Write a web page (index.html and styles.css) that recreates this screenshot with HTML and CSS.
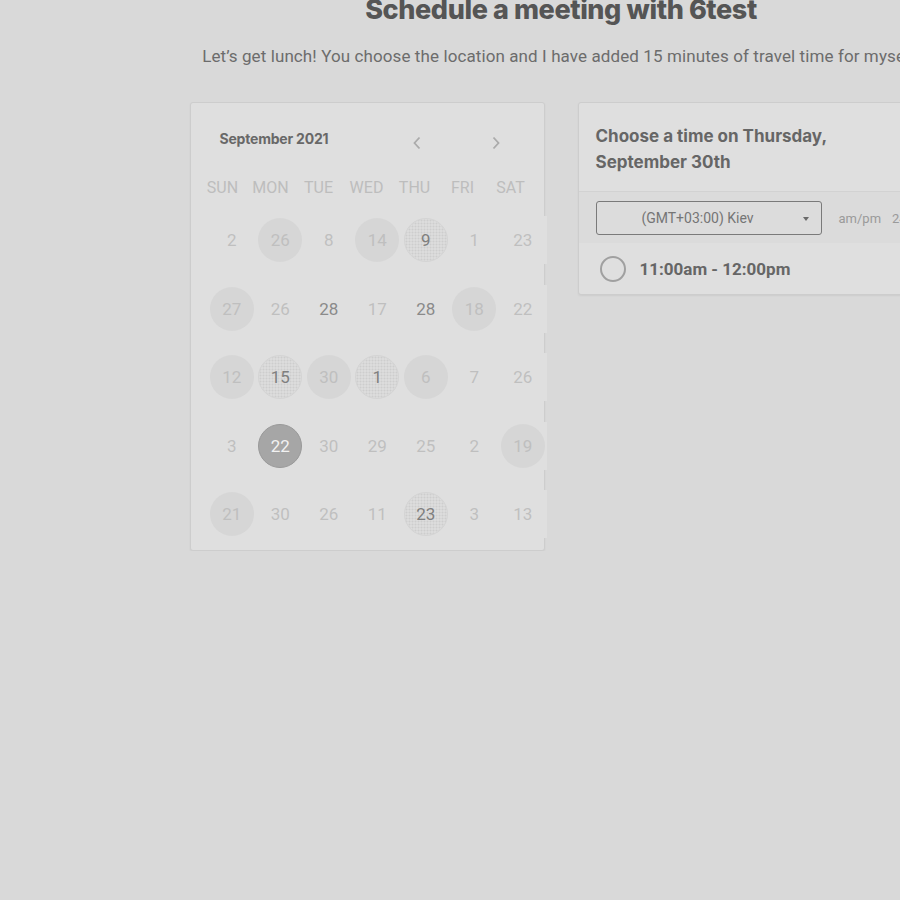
FILE: index.html
```html
<!DOCTYPE html>
<html lang="en">
<head>
<meta charset="utf-8">
<title>Schedule a meeting</title>
<link rel="stylesheet" href="styles.css">
</head>
<body>
<div class="page">
  <h1 class="title">Schedule a meeting with 6test</h1>
  <p class="subtitle">Let’s get lunch! You choose the location and I have added 15 minutes of travel time for myself.</p>
  <div class="cards">
    <section class="card calendar">
      <div class="cal-head">
        <span class="month">September 2021</span>
        <span class="navs">
          <svg class="nav" width="12" height="16" viewBox="0 0 12 16"><path d="M8.5 2.5 L3.5 8 L8.5 13.5" fill="none" stroke="#ababab" stroke-width="1.8"/></svg>
          <svg class="nav" width="12" height="16" viewBox="0 0 12 16"><path d="M3.5 2.5 L8.5 8 L3.5 13.5" fill="none" stroke="#ababab" stroke-width="1.8"/></svg>
        </span>
      </div>
      <div class="weekdays">
        <span>SUN</span><span>MON</span><span>TUE</span><span>WED</span><span>THU</span><span>FRI</span><span>SAT</span>
      </div>
      <div class="days">
        <div class="cell"><span class="d">2</span></div>
        <div class="cell"><span class="d fill">26</span></div>
        <div class="cell"><span class="d">8</span></div>
        <div class="cell"><span class="d fill">14</span></div>
        <div class="cell"><span class="d tex">9</span></div>
        <div class="cell"><span class="d">1</span></div>
        <div class="cell"><span class="d">23</span></div>

        <div class="cell"><span class="d fill">27</span></div>
        <div class="cell"><span class="d">26</span></div>
        <div class="cell"><span class="d dark">28</span></div>
        <div class="cell"><span class="d">17</span></div>
        <div class="cell"><span class="d dark">28</span></div>
        <div class="cell"><span class="d fill">18</span></div>
        <div class="cell"><span class="d">22</span></div>

        <div class="cell"><span class="d fill">12</span></div>
        <div class="cell"><span class="d tex">15</span></div>
        <div class="cell"><span class="d fill">30</span></div>
        <div class="cell"><span class="d tex">1</span></div>
        <div class="cell"><span class="d fill">6</span></div>
        <div class="cell"><span class="d">7</span></div>
        <div class="cell"><span class="d">26</span></div>

        <div class="cell"><span class="d">3</span></div>
        <div class="cell"><span class="d sel">22</span></div>
        <div class="cell"><span class="d">30</span></div>
        <div class="cell"><span class="d">29</span></div>
        <div class="cell"><span class="d">25</span></div>
        <div class="cell"><span class="d">2</span></div>
        <div class="cell"><span class="d fill">19</span></div>

        <div class="cell"><span class="d fill">21</span></div>
        <div class="cell"><span class="d">30</span></div>
        <div class="cell"><span class="d">26</span></div>
        <div class="cell"><span class="d">11</span></div>
        <div class="cell"><span class="d tex">23</span></div>
        <div class="cell"><span class="d">3</span></div>
        <div class="cell"><span class="d">13</span></div>
      </div>
    </section>

    <section class="card times">
      <h2 class="times-head">Choose a time on Thursday, September 30th</h2>
      <div class="tz-bar">
        <div class="select">
          <span class="select-text">(GMT+03:00) Kiev</span>
          <span class="caret"></span>
        </div>
        <span class="fmt"><span class="fmt-opt">am/pm</span><span class="fmt-opt">24h</span></span>
      </div>
      <div class="slot">
        <span class="radio"></span>
        <span class="slot-text">11:00am - 12:00pm</span>
      </div>
    </section>
  </div>
</div>
</body>
</html>
```

FILE: styles.css
```css
html, body {
  margin: 0;
  padding: 0;
  background: #d9d9d9;
  overflow: hidden;
}

.page {
  width: 1122px;
  text-align: center;
  font-family: Roboto, "Liberation Sans", sans-serif;
}

.title {
  margin: -7px 0 0;
  font-family: Inter, Roboto, sans-serif;
  font-weight: 800;
  font-size: 27px;
  line-height: 34px;
  letter-spacing: -0.4px;
  color: #555555;
}

.subtitle {
  margin: 19px 0 0;
  font-size: 17px;
  line-height: 20px;
  letter-spacing: 0.1px;
  color: #6c6c6c;
  white-space: nowrap;
}

.cards {
  display: flex;
  justify-content: center;
  align-items: flex-start;
  gap: 33px;
  margin-top: 36px;
  text-align: left;
}

.card {
  width: 355px;
  box-sizing: border-box;
  background: #dfdfdf;
  border: 1px solid #cdcdcd;
  border-radius: 3px;
  box-shadow: 0 1px 2px rgba(0, 0, 0, 0.06);
}

/* calendar */
.calendar {
  height: 449px;
  padding: 25px 0 0 8px;
}

.cal-head {
  display: flex;
  align-items: center;
  height: 24px;
  padding-left: 21px;
}

.month {
  font-family: Inter, Roboto, sans-serif;
  font-weight: 700;
  font-size: 14px;
  color: #686868;
  letter-spacing: -0.2px;
  margin-top: -3px;
}

.navs {
  display: flex;
  gap: 67px;
  margin-left: 83px;
  margin-top: 6px;
}

.weekdays {
  display: grid;
  grid-template-columns: repeat(7, 48px);
  margin-top: 23px;
  height: 24px;
  align-items: center;
}

.weekdays span {
  text-align: center;
  font-size: 16px;
  color: #bdbdbd;
}

.days {
  display: grid;
  grid-template-columns: repeat(7, 48.5px);
  grid-auto-rows: 48px;
  row-gap: 20.5px;
  margin-top: 17px;
  margin-left: 9px;
}

.cell {
  display: flex;
  align-items: center;
  justify-content: center;
  background: #dfdfdf;
}

.d {
  width: 44px;
  height: 44px;
  border-radius: 50%;
  display: flex;
  align-items: center;
  justify-content: center;
  font-size: 17px;
  color: #bfbfbf;
  box-sizing: border-box;
}

.d.fill {
  background: #d6d6d6;
}

.d.dark {
  color: #8a8a8a;
}

.d.tex {
  color: #7f7f7f;
  background-color: #dcdcdc;
  background-image: radial-gradient(circle, #cdcdcd 0.7px, transparent 1.2px);
  background-size: 3px 3px;
  border: 1px solid #d4d4d4;
}

.d.sel {
  background: #a6a6a6;
  color: #f2f2f2;
  border: 1px solid #999999;
}

/* times */
.times {
  overflow: hidden;
}

.times-head {
  margin: 0;
  padding: 20px 20px 16px 17px;
  font-family: Inter, Roboto, sans-serif;
  font-weight: 700;
  font-size: 17px;
  line-height: 26px;
  letter-spacing: 0px;
  color: #666666;
  border-bottom: 1px solid #d2d2d2;
}

.tz-bar {
  display: flex;
  align-items: center;
  gap: 17px;
  padding: 9px 17px 8px;
  background: #dbdbdb;
  white-space: nowrap;
}

.select {
  width: 226px;
  height: 34px;
  box-sizing: border-box;
  border: 1px solid #7a7a7a;
  border-radius: 3px;
  background: #dcdcdc;
  display: flex;
  align-items: center;
  position: relative;
}

.select-text {
  flex: 1;
  text-align: center;
  font-size: 14px;
  color: #757575;
  padding-right: 22px;
}

.caret {
  position: absolute;
  right: 12px;
  top: 15px;
  width: 0;
  height: 0;
  border-left: 3.5px solid transparent;
  border-right: 3.5px solid transparent;
  border-top: 4px solid #6a6a6a;
}

.fmt {
  display: flex;
  gap: 11px;
  font-size: 13px;
  color: #9a9a9a;
}

.slot {
  display: flex;
  align-items: center;
  gap: 14px;
  height: 51px;
  padding-left: 21px;
}

.radio {
  width: 26px;
  height: 26px;
  box-sizing: border-box;
  border: 2px solid #a0a0a0;
  border-radius: 50%;
}

.slot-text {
  font-family: Roboto, sans-serif;
  font-weight: 700;
  font-size: 17px;
  color: #666666;
}
```
